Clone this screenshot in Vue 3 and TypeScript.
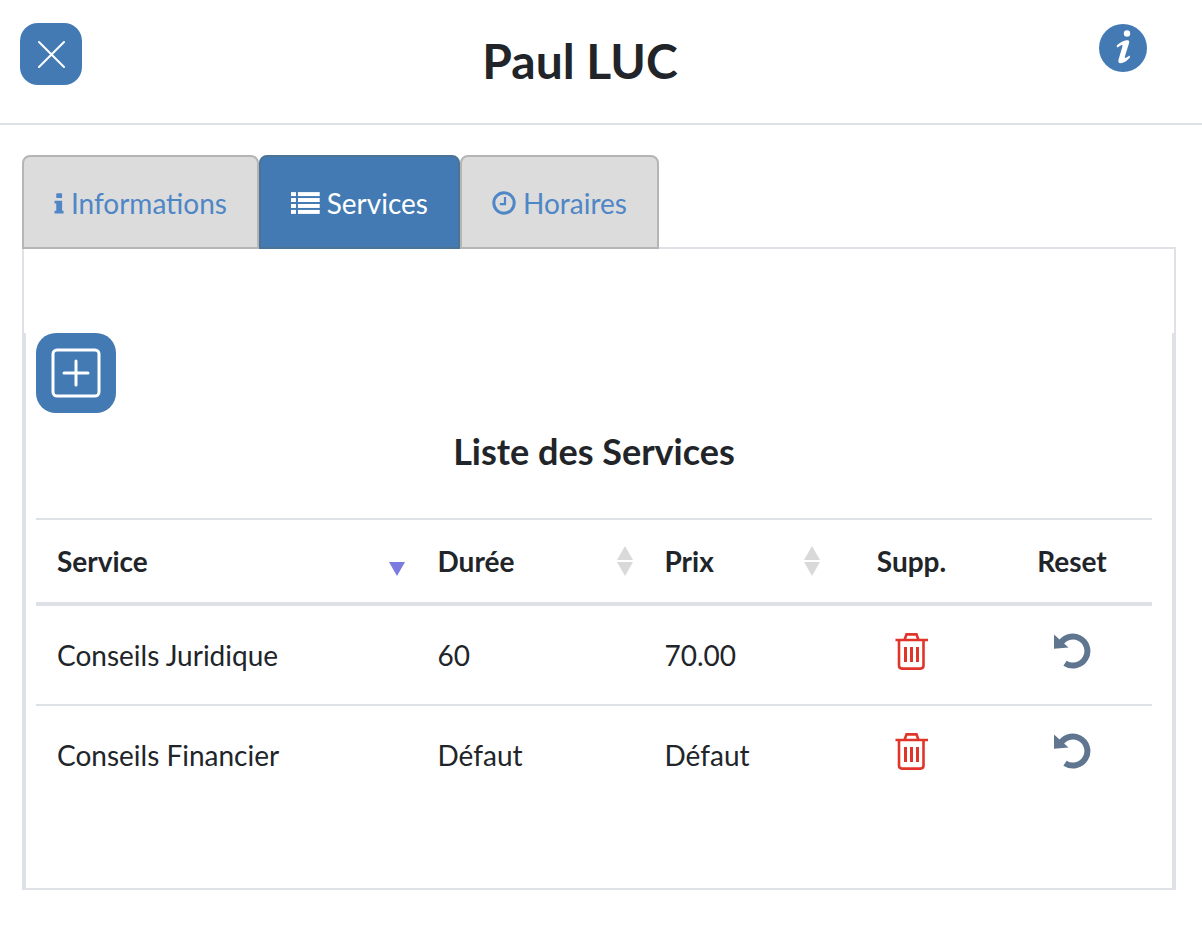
<script setup lang="ts">
interface Row {
  service: string
  duree: string
  prix: string
}

const rows: Row[] = [
  { service: 'Conseils Juridique', duree: '60', prix: '70.00' },
  { service: 'Conseils Financier', duree: 'Défaut', prix: 'Défaut' },
]
</script>

<template>
  <div class="page">
    <header class="top">
      <button class="close" type="button" aria-label="Fermer">
        <svg width="28" height="28" viewBox="0 0 28 28">
          <path d="M2 2 L27 27 M27 2 L2 27" stroke="#fff" stroke-width="2" stroke-linecap="round" />
        </svg>
      </button>
      <h1 class="name">Paul LUC</h1>
      <svg class="info" width="48" height="48" viewBox="0 0 48 48">
        <circle cx="24" cy="24" r="24" fill="#437ab3" />
        <circle cx="28" cy="9.5" r="3.2" fill="#fff" />
        <path d="M17.5 22 C20.5 18.5 25 16 29 16.2 C30.5 16.4 30.4 18 30 19.2 L25.8 32.8 C25.5 34.2 26.5 34 27.5 33.4 L30.6 31.5 L31 33.5 C28 37 24.5 39.2 21.5 39.2 C19.5 39.2 19 37.8 19.5 35.8 L23.4 22.5 C23.7 21.2 23 20.8 22 21.3 L18.5 23.5 Z" fill="#fff" />
      </svg>
    </header>

    <main class="content">
      <nav class="tabs">
        <a class="tab">
          <svg width="11" height="23" viewBox="0 0 11 23" fill="currentColor">
            <rect x="2.5" y="0" width="6.5" height="5.5" rx="1" />
            <path d="M0.6 8.5 H9 V19.5 H10.6 V22.6 H0.6 V19.5 H2.5 V11.6 H0.6 Z" />
          </svg>
          Informations
        </a>
        <a class="tab active">
          <svg width="29" height="22" viewBox="0 0 29 22" fill="currentColor">
            <rect x="0" y="0" width="5" height="4" />
            <rect x="7" y="0" width="22" height="4" />
            <rect x="0" y="6" width="5" height="4" />
            <rect x="7" y="6" width="22" height="4" />
            <rect x="0" y="12" width="5" height="4" />
            <rect x="7" y="12" width="22" height="4" />
            <rect x="0" y="18" width="5" height="4" />
            <rect x="7" y="18" width="22" height="4" />
          </svg>
          Services
        </a>
        <a class="tab">
          <svg width="24" height="24" viewBox="0 0 24 24">
            <circle cx="12" cy="12" r="10.2" fill="none" stroke="currentColor" stroke-width="3" />
            <path d="M13 6 V13.2 H7.8" fill="none" stroke="currentColor" stroke-width="2.2" />
          </svg>
          Horaires
        </a>
      </nav>

      <section class="panel">
        <div class="inner">
          <button class="add" type="button" aria-label="Ajouter">
            <svg width="50" height="50" viewBox="0 0 50 50">
              <rect x="2" y="2" width="46" height="46" rx="4" fill="none" stroke="#fff" stroke-width="3" />
              <path d="M25 13 V37 M13 25 H37" stroke="#fff" stroke-width="3" stroke-linecap="round" />
            </svg>
          </button>
          <h2 class="title">Liste des Services</h2>

          <table class="grid">
            <colgroup>
              <col style="width: 381px" />
              <col style="width: 227px" />
              <col style="width: 187px" />
              <col style="width: 161px" />
              <col style="width: 160px" />
            </colgroup>
            <thead>
              <tr>
                <th class="sort sorted">Service</th>
                <th class="sort">Durée</th>
                <th class="sort">Prix</th>
                <th class="mid">Supp.</th>
                <th class="mid">Reset</th>
              </tr>
            </thead>
            <tbody>
              <tr v-for="row in rows" :key="row.service">
                <td>{{ row.service }}</td>
                <td>{{ row.duree }}</td>
                <td>{{ row.prix }}</td>
                <td class="mid">
                  <svg class="act" width="34" height="38" viewBox="0 0 34 38" fill="none" stroke="#e0352b" stroke-width="2.6">
                    <path d="M0.5 8 H33" />
                    <path d="M9.5 8 L11.5 2.4 H21.5 L23.5 8" />
                    <path d="M4 8 V33.5 C4 35.5 5.2 36.6 7 36.6 H25.5 C27.3 36.6 28.5 35.5 28.5 33.5 V8" />
                    <path d="M10.5 15 V30 M16.5 15 V30 M22.5 15 V30" stroke-width="3" />
                  </svg>
                </td>
                <td class="mid">
                  <svg class="act" width="38" height="38" viewBox="0 0 38 38">
                    <path d="M6.6 13.2 A14.5 14.5 0 1 1 12 31.2" fill="none" stroke="#5f7590" stroke-width="6" />
                    <path d="M1 2.5 L15.5 15.5 L1 16.8 Z" fill="#5f7590" />
                  </svg>
                </td>
              </tr>
            </tbody>
          </table>
        </div>
      </section>
    </main>
  </div>
</template>

<style>
html,
body {
  margin: 0;
  background: #fff;
}
</style>

<style scoped>
.page {
  width: 1202px;
  height: 932px;
  overflow: hidden;
  font-family: Lato, 'Liberation Sans', sans-serif;
  color: #212529;
}

.top {
  position: relative;
  display: flex;
  align-items: center;
  justify-content: center;
  height: 123px;
  border-bottom: 2px solid #dee2e6;
}

.close {
  position: absolute;
  left: 20px;
  top: 23px;
  display: flex;
  align-items: center;
  justify-content: center;
  width: 62px;
  height: 62px;
  padding: 0;
  border: 0;
  border-radius: 18px;
  background: #437ab3;
}

.name {
  margin: 0 42px 2px 0;
  font-size: 48px;
  font-weight: 700;
}

.info {
  position: absolute;
  left: 1099px;
  top: 24px;
}

.content {
  padding: 30px 26px 0 22px;
}

.tabs {
  display: flex;
  position: relative;
  z-index: 1;
}

.tab {
  display: flex;
  align-items: center;
  justify-content: center;
  gap: 7px;
  box-sizing: border-box;
  height: 94px;
  padding: 2px 30px 0;
  border: 2px solid #b5b5b5;
  border-radius: 8px 8px 0 0;
  background: #dcdcdc;
  color: #4f86c6;
  font-size: 28px;
}

.tab:nth-child(1) {
  width: 237px;
}

.tab:nth-child(2) {
  width: 201px;
}

.tab:nth-child(3) {
  width: 199px;
}

.tab.active {
  border-color: #4a7396;
  background: #437ab3;
  color: #fff;
}

.panel {
  box-sizing: border-box;
  height: 643px;
  margin-top: -2px;
  padding-top: 84px;
  border: 2px solid #dee2e6;
}

.inner {
  box-sizing: border-box;
  height: 555px;
  padding: 0 20px 0 10px;
  border-left: 2px solid #dee2e6;
  border-right: 2px solid #dee2e6;
}

.add {
  display: flex;
  align-items: center;
  justify-content: center;
  width: 80px;
  height: 80px;
  padding: 0;
  border: 0;
  border-radius: 20px;
  background: #437ab3;
}

.title {
  margin: 16px 0 0;
  height: 89px;
  font-size: 36px;
  line-height: 44px;
  font-weight: 700;
  text-align: center;
}

.grid {
  width: 1116px;
  table-layout: fixed;
  border-collapse: collapse;
  font-size: 28px;
}

th,
td {
  padding: 0 21px;
  text-align: left;
}

th:nth-child(2),
th:nth-child(3),
td:nth-child(2),
td:nth-child(3) {
  padding-left: 20.5px;
}

th {
  position: relative;
  height: 82px;
  border-top: 2px solid #dee2e6;
  border-bottom: 4px solid #dee2e6;
  font-weight: 700;
}

td {
  height: 98px;
  border-bottom: 2px solid #dee2e6;
}

tbody tr:last-child td {
  border-bottom: 0;
}

.mid {
  padding: 0;
  text-align: center;
}

.act {
  display: inline-block;
  vertical-align: middle;
  margin-top: -15px;
}

.sort::before,
.sort::after {
  content: '';
  position: absolute;
  right: 11px;
  width: 0;
  height: 0;
  border-left: 8px solid transparent;
  border-right: 8px solid transparent;
}

.sort::before {
  top: 26px;
  border-bottom: 14px solid #d9d9d9;
}

.sort::after {
  top: 42px;
  border-top: 14px solid #d9d9d9;
}

.sorted::before {
  display: none;
}

.sorted::after {
  right: 12px;
  border-top-color: #7b7be0;
}
</style>
